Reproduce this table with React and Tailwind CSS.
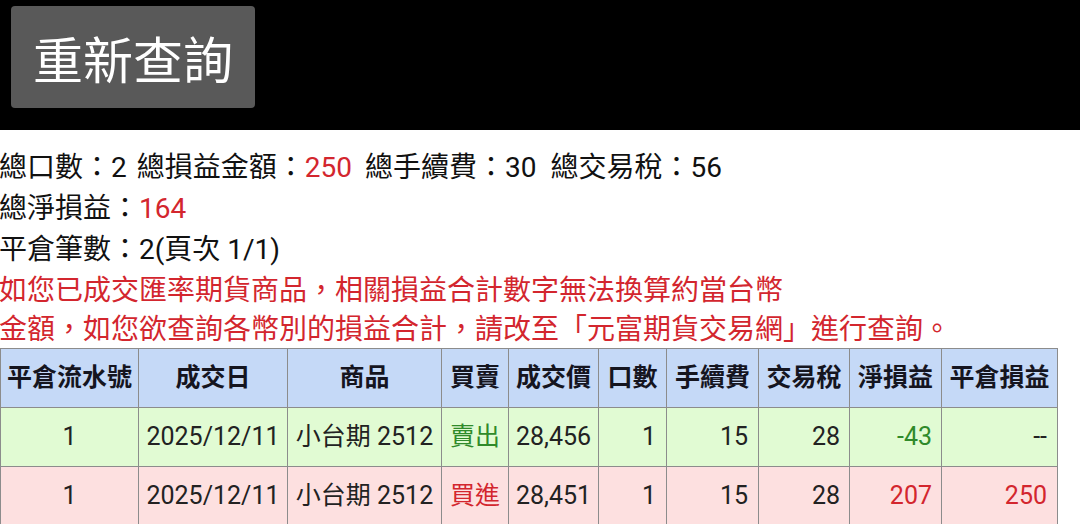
import React from "react";

const rows = [
  { no: "1", date: "2025/12/11", prod: "小台期 2512", side: "賣出", sideCls: "text-[#2f8a2a]", price: "28,456", qty: "1", fee: "15", tax: "28", net: "-43", netCls: "text-[#2f8a2a]", pl: "--", plCls: "text-[#222]", bg: "bg-[#e1fbd3]" },
  { no: "1", date: "2025/12/11", prod: "小台期 2512", side: "買進", sideCls: "text-[#d3262e]", price: "28,451", qty: "1", fee: "15", tax: "28", net: "207", netCls: "text-[#d3262e]", pl: "250", plCls: "text-[#d3262e]", bg: "bg-[#fde0e0]" },
];

export default function App() {
  const th = "border border-[#8c8c8c] font-bold text-[25px] text-[#15151f] h-[59px] p-0 text-center whitespace-nowrap";
  const td = "border border-[#8c8c8c] text-[25px] h-[59px] p-0 whitespace-nowrap";
  const dark = "text-[#222]";
  return (
    <div className="w-[1080px] h-[524px] overflow-hidden bg-white font-[Roboto,'Noto_Sans_CJK_TC',sans-serif]">
      <div className="h-[130px] bg-black pt-[6px] pl-[11px]">
        <div className="w-[244px] h-[102px] rounded-[4px] bg-[#595959] flex items-center justify-center pt-[10px] text-white text-[50px] leading-none">
          重新查詢
        </div>
      </div>
      <div className="pt-[17px] text-[28px] text-[#111] ml-[-1px]">
        <div className="h-[41px] flex items-center whitespace-nowrap">
          <span>總口數：2</span>
          <span className="ml-[10px]">總損益金額：</span>
          <span className="text-[#d3262e]">250</span>
          <span className="ml-[13px]">總手續費：30</span>
          <span className="ml-[14px]">總交易稅：56</span>
        </div>
        <div className="h-[41px] flex items-center whitespace-nowrap">
          <span>總淨損益：</span>
          <span className="text-[#d3262e]">164</span>
        </div>
        <div className="h-[42px] flex items-center whitespace-nowrap">
          <span>平倉筆數：2(頁次 1/1)</span>
        </div>
        <div className="h-[40px] flex items-center whitespace-nowrap text-[#d3262e]">
          如您已成交匯率期貨商品，相關損益合計數字無法換算約當台幣
        </div>
        <div className="h-[37px] flex items-center whitespace-nowrap text-[#d3262e]">
          金額，如您欲查詢各幣別的損益合計，請改至「元富期貨交易網」進行查詢。
        </div>
      </div>
      <table className="table-fixed border-collapse w-[1057px]">
        <thead>
          <tr className="bg-[#c5d9f7]">
            <th className={`${th} w-[138px]`}>平倉流水號</th>
            <th className={`${th} w-[149px]`}>成交日</th>
            <th className={`${th} w-[154px]`}>商品</th>
            <th className={`${th} w-[67px]`}>買賣</th>
            <th className={`${th} w-[90px]`}>成交價</th>
            <th className={`${th} w-[68px]`}>口數</th>
            <th className={`${th} w-[92px]`}>手續費</th>
            <th className={`${th} w-[91px]`}>交易稅</th>
            <th className={`${th} w-[92px]`}>淨損益</th>
            <th className={`${th} w-[116px]`}>平倉損益</th>
          </tr>
        </thead>
        <tbody>
          {rows.map((r, i) => (
            <tr key={i} className={r.bg}>
              <td className={`${td} ${dark} text-center`}>{r.no}</td>
              <td className={`${td} ${dark} text-center`}>{r.date}</td>
              <td className={`${td} ${dark} text-center`}>{r.prod}</td>
              <td className={`${td} text-center ${r.sideCls}`}>{r.side}</td>
              <td className={`${td} ${dark} text-center`}>{r.price}</td>
              <td className={`${td} ${dark} text-right pr-[10px]`}>{r.qty}</td>
              <td className={`${td} ${dark} text-right pr-[10px]`}>{r.fee}</td>
              <td className={`${td} ${dark} text-right pr-[9px]`}>{r.tax}</td>
              <td className={`${td} text-right pr-[9px] ${r.netCls}`}>{r.net}</td>
              <td className={`${td} text-right pr-[10px] ${r.plCls}`}>{r.pl}</td>
            </tr>
          ))}
        </tbody>
      </table>
    </div>
  );
}
